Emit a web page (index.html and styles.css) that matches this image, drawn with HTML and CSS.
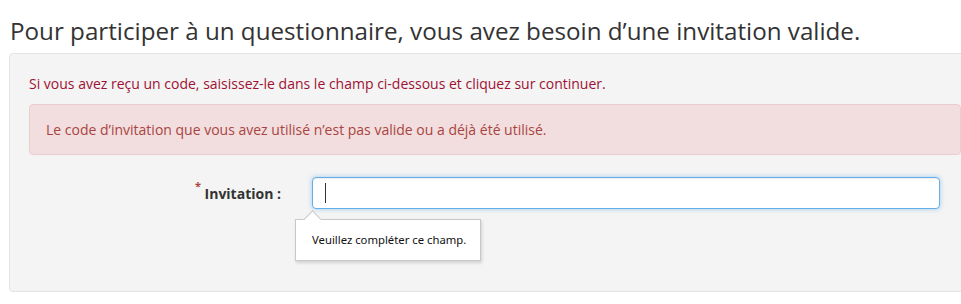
FILE: index.html
```html
<!DOCTYPE html>
<html lang="fr">
<head>
<meta charset="UTF-8">
<meta name="viewport" content="width=device-width, initial-scale=1.0">
<title>Invitation</title>
<link rel="stylesheet" href="styles.css">
</head>
<body>

<h2 class="page-title">Pour participer à un questionnaire, vous avez besoin d’une invitation valide.</h2>

<div class="well">
  <p class="hint">Si vous avez reçu un code, saisissez-le dans le champ ci-dessous et cliquez sur continuer.</p>

  <div class="alert">Le code d’invitation que vous avez utilisé n’est pas valide ou a déjà été utilisé.</div>

  <form class="form-row">
    <label for="token" class="field-label"><span class="required">*</span> Invitation :</label>
    <div class="field">
      <input type="text" id="token" class="form-control" required>
      <span class="caret"></span>
      <div class="bubble">Veuillez compléter ce champ.</div>
    </div>
  </form>
</div>

</body>
</html>
```

FILE: styles.css
```css
body {
  font-family: 'Open Sans', 'Noto Sans', sans-serif;
  font-size: 14px;
  color: #333;
  margin: 0;
  padding: 0 0 0 9px;
  overflow: hidden;
  background-color: white;
}
.page-title {
  font-size: 24.2px;
  font-weight: normal;
  margin: 16px 0 7px 1px;
  line-height: 30px;
}
.well {
  background-color: #f4f4f4;
  border: 1px solid #e3e3e3;
  border-radius: 4px;
  margin-right: -20px;
  padding: 20px 19px 82px 19px;
}
.hint {
  color: #9e1133;
  margin: 0 0 10px 0;
  line-height: 20px;
}
.alert {
  background-color: #f2dede;
  border: 1px solid #ebccd1;
  border-radius: 4px;
  color: #a94442;
  padding: 15px 16px;
  line-height: 19px;
}
.form-row {
  display: flex;
  align-items: center;
  margin-top: 22px;
}
.field-label {
  width: 283px;
  flex-shrink: 0;
  text-align: right;
  font-weight: bold;
  padding-right: 31px;
  box-sizing: border-box;
}
.required {
  color: #a94442;
  font-size: 11px;
  vertical-align: top;
  position: relative;
  top: -6px;
}
.field {
  position: relative;
  width: 628px;
  flex-shrink: 0;
}
.form-control {
  display: block;
  width: 100%;
  height: 32px;
  box-sizing: border-box;
  border: 1px solid #66afe9;
  border-radius: 4px;
  outline: 0;
  box-shadow: inset 0 1px 1px rgba(0,0,0,.075), 0 0 5px rgba(102,175,233,.6);
  background: white;
}
.caret {
  position: absolute;
  left: 13px;
  top: 6px;
  width: 1px;
  height: 20px;
  background: #333;
}
.bubble {
  position: absolute;
  left: -17px;
  top: 42px;
  width: 186px;
  height: 42px;
  box-sizing: border-box;
  background: white;
  border: 1px solid #c8c8c8;
  box-shadow: 1px 2px 3px rgba(0,0,0,.15);
  font-family: 'Noto Sans', sans-serif;
  font-size: 11.3px;
  color: #111;
  padding: 12px 0 0 16px;
}
.bubble::before {
  content: '';
  position: absolute;
  left: 10px;
  top: -7px;
  width: 12px;
  height: 12px;
  background: white;
  border-left: 1px solid #c8c8c8;
  border-top: 1px solid #c8c8c8;
  transform: rotate(45deg);
}
```
